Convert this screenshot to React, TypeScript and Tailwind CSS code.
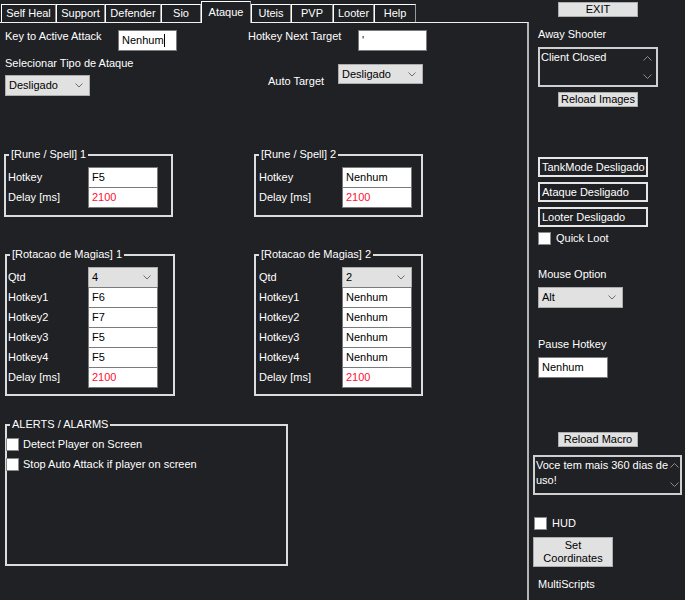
import React from 'react';

type Tab = { label: string; w: string; active?: boolean };

const tabs: Tab[] = [
  { label: 'Self Heal', w: 'w-[55px]' },
  { label: 'Support', w: 'w-[49px]' },
  { label: 'Defender', w: 'w-[56px]' },
  { label: 'Sio', w: 'w-[40px]' },
  { label: 'Ataque', w: 'w-[50px]', active: true },
  { label: 'Uteis', w: 'w-[40px]' },
  { label: 'PVP', w: 'w-[42px]' },
  { label: 'Looter', w: 'w-[41px]' },
  { label: 'Help', w: 'w-[42px]' },
];

const Chevron = () => (
  <svg width="8" height="5" viewBox="0 0 8 5" className="shrink-0">
    <path d="M0.5 0.5 L4 4 L7.5 0.5" fill="none" stroke="#6d6d6d" strokeWidth="1" />
  </svg>
);

const ScrollArrow = ({ up }: { up?: boolean }) => (
  <svg width="9" height="5" viewBox="0 0 9 5">
    <path d={up ? 'M0.5 4.5 L4.5 0.5 L8.5 4.5' : 'M0.5 0.5 L4.5 4.5 L8.5 0.5'} fill="none" stroke="#8c8c8c" strokeWidth="1" />
  </svg>
);

const Select = ({ value, className }: { value: string; className: string }) => (
  <div className={`flex items-center justify-between bg-[#e1e1e1] border border-[#adadad] text-black pl-[3px] pr-[6px] ${className}`}>
    <span>{value}</span>
    <Chevron />
  </div>
);

const Field = ({ value, red, caret, className }: { value: string; red?: boolean; caret?: boolean; className: string }) => (
  <div className={`flex items-center bg-white border border-[#7a7a7a] pl-[3px] ${red ? 'text-[#ff1030]' : 'text-black'} ${className}`}>
    <span>{value}</span>
    {caret && <span className="w-px h-[13px] bg-black" />}
  </div>
);

const Check = () => <span className="w-[13px] h-[13px] bg-white border border-[#8a8a8a] shrink-0" />;

const Button = ({ children, className }: { children: React.ReactNode; className: string }) => (
  <div className={`flex flex-col items-center justify-center bg-[#e1e1e1] border border-[#adadad] text-black text-center ${className}`}>
    {children}
  </div>
);

const GroupBox = ({ title, className, children }: { title: string; className: string; children: React.ReactNode }) => (
  <div className={`relative border-2 border-[#dcdcdc] ${className}`}>
    <span className="absolute -top-[8px] left-[3px] px-[2px] bg-[#202124] leading-[13px] whitespace-nowrap">{title}</span>
    {children}
  </div>
);

const Row = ({ label, lw, first, children }: { label: string; lw: string; first?: boolean; children: React.ReactNode }) => (
  <div className={`flex items-center ${first ? '' : '-mt-px'}`}>
    <span className={lw}>{label}</span>
    {children}
  </div>
);

const TextBox = ({ children, className }: { children: React.ReactNode; className: string }) => (
  <div className={`flex border-2 border-[#cfcfcf] ${className}`}>
    <div className="flex-1 pl-[1px] whitespace-nowrap">{children}</div>
    <div className="w-[17px] flex flex-col items-center justify-between pt-[6px] pb-[6px]">
      <ScrollArrow up />
      <ScrollArrow />
    </div>
  </div>
);

const StatusBox = ({ label, className }: { label: string; className: string }) => (
  <div className={`flex items-center ml-[9px] w-[110px] h-[20px] border-2 border-[#e6e6e6] pl-[2px] ${className}`}>{label}</div>
);

const Rotacao = ({ n, values, qtd, lw, className, pad }: { n: number; values: string[]; qtd: string; lw: string; className: string; pad: string }) => (
  <GroupBox title={`[Rotacao de Magias] ${n}`} className={`pt-[11px] pb-[6px] ${pad} ${className}`}>
    <Row label="Qtd" lw={lw} first>
      <Select value={qtd} className="w-[70px] h-[21px]" />
    </Row>
    {values.map((v, i) => (
      <Row key={i} label={`Hotkey${i + 1}`} lw={lw}>
        <Field value={v} className="w-[70px] h-[21px]" />
      </Row>
    ))}
    <Row label="Delay [ms]" lw={lw}>
      <Field value="2100" red className="w-[70px] h-[21px]" />
    </Row>
  </GroupBox>
);

export default function App() {
  return (
    <div className="w-[685px] h-[600px] bg-[#202124] flex overflow-hidden text-[11px] leading-[13px] text-white font-['Liberation_Sans',Arial,sans-serif]">
      {/* Left: tabs + Ataque page */}
      <div className="w-[529px] flex flex-col">
        <div className="flex items-end h-[22px] pl-[1px]">
          {tabs.map((t) =>
            t.active ? (
              <div key={t.label} className={`${t.w} h-[22px] -mb-px relative z-10 bg-[#202124] flex items-center justify-center border-l border-t border-r border-l-white border-t-white border-r-[#9a9a9a]`}>
                {t.label}
              </div>
            ) : (
              <div key={t.label} className={`${t.w} h-[18px] flex items-center justify-center border-l border-t border-r border-l-white border-t-white border-r-[#9a9a9a]`}>
                {t.label}
              </div>
            )
          )}
        </div>

        <div className="flex-1 flex flex-col items-start border-t border-t-[#f0f0f0] border-r-2 border-r-[#b4b4b4] pl-[4px]">
          <div className="flex items-start mt-[7px]">
            <span className="w-[114px] pl-[1px]">Key to Active Attack</span>
            <Field value="Nenhum" caret className="w-[59px] h-[21px]" />
            <span className="ml-[71px] w-[110px]">Hotkey Next Target</span>
            <Field value="'" className="w-[69px] h-[21px]" />
          </div>

          <div className="flex items-start mt-[6px]">
            <div className="w-[264px] pl-[1px] flex flex-col items-start">
              <span>Selecionar Tipo de Ataque</span>
              <Select value="Desligado" className="mt-[5px] w-[85px] h-[21px]" />
            </div>
            <span className="mt-[18px] w-[70px]">Auto Target</span>
            <Select value="Desligado" className="mt-[7px] w-[85px] h-[20px]" />
          </div>

          <div className="flex mt-[58px]">
            <GroupBox title="[Rune / Spell] 1" className="w-[169px] pt-[11px] pb-[7px] pl-[2px]">
              <Row label="Hotkey" lw="w-[80px]" first>
                <Field value="F5" className="w-[70px] h-[21px]" />
              </Row>
              <Row label="Delay [ms]" lw="w-[80px]">
                <Field value="2100" red className="w-[70px] h-[21px]" />
              </Row>
            </GroupBox>
            <GroupBox title="[Rune / Spell] 2" className="ml-[81px] w-[169px] pt-[11px] pb-[7px] pl-[3px]">
              <Row label="Hotkey" lw="w-[83px]" first>
                <Field value="Nenhum" className="w-[70px] h-[21px]" />
              </Row>
              <Row label="Delay [ms]" lw="w-[83px]">
                <Field value="2100" red className="w-[70px] h-[21px]" />
              </Row>
            </GroupBox>
          </div>

          <div className="flex mt-[37px]">
            <Rotacao n={1} qtd="4" values={['F6', 'F7', 'F5', 'F5']} lw="w-[80px]" pad="pl-[1px]" className="ml-[1px] w-[170px]" />
            <Rotacao n={2} qtd="2" values={['Nenhum', 'Nenhum', 'Nenhum', 'Nenhum']} lw="w-[83px]" pad="pl-[3px]" className="ml-[79px] w-[169px]" />
          </div>

          <GroupBox title="ALERTS / ALARMS" className="mt-[28px] ml-[1px] w-[283px] h-[142px] pt-[12px]">
            <div className="flex items-center -ml-px h-[13px]">
              <Check />
              <span className="ml-[4px]">Detect Player on Screen</span>
            </div>
            <div className="flex items-center -ml-px h-[13px] mt-[7px]">
              <Check />
              <span className="ml-[4px]">Stop Auto Attack if player on screen</span>
            </div>
          </GroupBox>
        </div>
      </div>

      {/* Right column */}
      <div className="flex-1 flex flex-col items-start">
        <Button className="mt-[2px] ml-[29px] w-[80px] h-[15px]">EXIT</Button>
        <span className="mt-[11px] ml-[9px]">Away Shooter</span>
        <TextBox className="mt-[6px] ml-[9px] w-[120px] h-[40px] pt-[1px]">
          <div className="pt-[1px]">Client Closed</div>
        </TextBox>
        <Button className="mt-[5px] ml-[29px] w-[80px] h-[15px]">Reload Images</Button>

        <StatusBox label="TankMode Desligado" className="mt-[50px]" />
        <StatusBox label="Ataque Desligado" className="mt-[5px]" />
        <StatusBox label="Looter Desligado" className="mt-[5px]" />
        <div className="flex items-center mt-[5px] ml-[9px] h-[13px]">
          <Check />
          <span className="ml-[5px]">Quick Loot</span>
        </div>

        <span className="mt-[23px] ml-[9px]">Mouse Option</span>
        <Select value="Alt" className="mt-[6px] ml-[9px] w-[85px] h-[21px]" />

        <span className="mt-[30px] ml-[9px]">Pause Hotkey</span>
        <Field value="Nenhum" className="mt-[6px] ml-[9px] w-[70px] h-[21px]" />

        <Button className="mt-[54px] ml-[29px] w-[80px] h-[15px]">Reload Macro</Button>
        <TextBox className="mt-[8px] ml-[4px] w-[149px] h-[40px] leading-[15px]">
          <div className="pt-[1px]">
            Voce tem mais 360 dias de
            <br />
            uso!
          </div>
        </TextBox>

        <div className="flex items-center mt-[22px] ml-[5px] h-[13px]">
          <Check />
          <span className="ml-[5px]">HUD</span>
        </div>
        <Button className="mt-[7px] ml-[4px] w-[80px] h-[30px]">
          <span>Set</span>
          <span>Coordinates</span>
        </Button>
        <span className="mt-[11px] ml-[9px]">MultiScripts</span>
      </div>
    </div>
  );
}
